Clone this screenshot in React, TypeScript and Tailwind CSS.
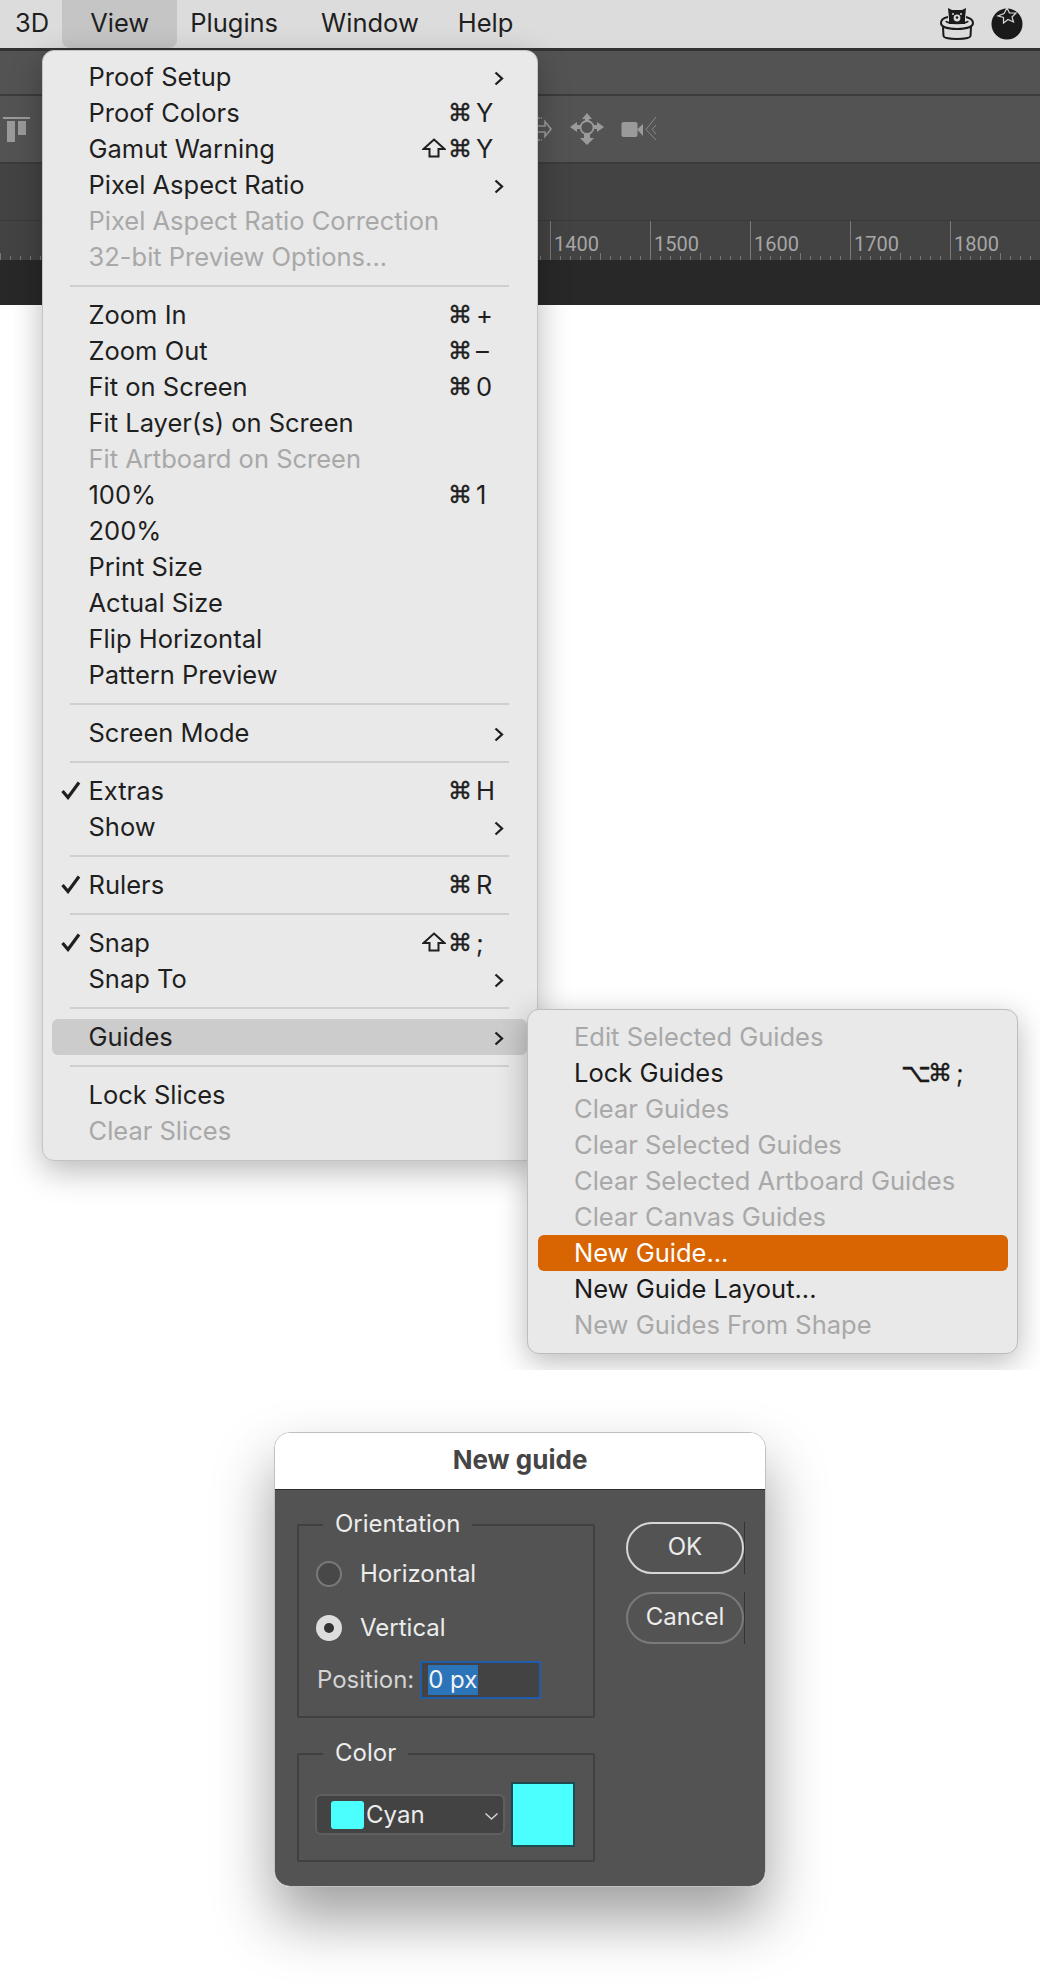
import { Fragment } from 'react';

type Item = { label: string; off?: boolean; check?: boolean; arrow?: boolean; shift?: boolean; cmd?: boolean; key2?: string; active?: boolean };

const groups: Item[][] = [
  [
    { label: 'Proof Setup', arrow: true },
    { label: 'Proof Colors', cmd: true, key2: 'Y' },
    { label: 'Gamut Warning', shift: true, cmd: true, key2: 'Y' },
    { label: 'Pixel Aspect Ratio', arrow: true },
    { label: 'Pixel Aspect Ratio Correction', off: true },
    { label: '32-bit Preview Options...', off: true },
  ],
  [
    { label: 'Zoom In', cmd: true, key2: '+' },
    { label: 'Zoom Out', cmd: true, key2: '–' },
    { label: 'Fit on Screen', cmd: true, key2: '0' },
    { label: 'Fit Layer(s) on Screen' },
    { label: 'Fit Artboard on Screen', off: true },
    { label: '100%', cmd: true, key2: '1' },
    { label: '200%' },
    { label: 'Print Size' },
    { label: 'Actual Size' },
    { label: 'Flip Horizontal' },
    { label: 'Pattern Preview' },
  ],
  [{ label: 'Screen Mode', arrow: true }],
  [
    { label: 'Extras', check: true, cmd: true, key2: 'H' },
    { label: 'Show', arrow: true },
  ],
  [{ label: 'Rulers', check: true, cmd: true, key2: 'R' }],
  [
    { label: 'Snap', check: true, shift: true, cmd: true, key2: ';' },
    { label: 'Snap To', arrow: true },
  ],
  [{ label: 'Guides', arrow: true, active: true }],
  [{ label: 'Lock Slices' }, { label: 'Clear Slices', off: true }],
];

const guideItems = [
  { label: 'Edit Selected Guides', off: true },
  { label: 'Lock Guides', shortcut: true },
  { label: 'Clear Guides', off: true },
  { label: 'Clear Selected Guides', off: true },
  { label: 'Clear Selected Artboard Guides', off: true },
  { label: 'Clear Canvas Guides', off: true },
  { label: 'New Guide...', picked: true },
  { label: 'New Guide Layout...' },
  { label: 'New Guides From Shape', off: true },
];

const rulerLabels = ['1400', '1500', '1600', '1700', '1800'];

function Chevron() {
  return (
    <svg width="10" height="15" viewBox="0 0 10 15" className="absolute left-[442px] top-[12px]" fill="none" stroke="#1f1f1f" strokeWidth="2.3">
      <path d="M1.5 1.5 L8 7.5 L1.5 13.5" />
    </svg>
  );
}

function Tick() {
  return (
    <svg width="20" height="19" viewBox="0 0 20 19" className="absolute left-[9px] top-[8px]" fill="none" stroke="#1f1f1f" strokeWidth="3.2">
      <path d="M1.5 10 L7 16.5 L18 1.5" />
    </svg>
  );
}

function ShiftIcon() {
  return (
    <svg width="24" height="20" viewBox="0 0 24 20" className="absolute left-[370px] top-[7px]" fill="none" stroke="#1f1f1f" strokeWidth="2">
      <path d="M12 1.5 L22.5 11 H16.5 V18.5 H7.5 V11 H1.5 Z" />
    </svg>
  );
}

// one keyboard symbol, placed on its own column of the row
function KeySymbol({ glyph, className }: { glyph: string; className: string }) {
  return (
    <span className={`absolute top-0 flex h-full items-center font-['DejaVu_Sans',sans-serif] ${className}`}>{glyph}</span>
  );
}

function MenuRow({ item }: { item: Item }) {
  return (
    <div className={`relative flex h-[36px] items-center rounded-[6px] pl-[36.5px] ${item.active ? 'bg-[#cccccc]' : ''} ${item.off ? 'text-[#a8a8a8]' : 'text-[#1f1f1f]'}`}>
      {item.check && <Tick />}
      <span>{item.label}</span>
      {item.shift && <ShiftIcon />}
      {item.cmd && <KeySymbol glyph="⌘" className="left-[396px] text-[24px] [-webkit-text-stroke:0.4px]" />}
      {item.key2 && <span className="absolute left-[424px] top-0 flex h-full items-center">{item.key2}</span>}
      {item.arrow && <Chevron />}
    </div>
  );
}

function Ruler() {
  const ticks = Array.from({ length: 110 }, (_, i) => i);
  return (
    <div className="relative h-[40px] border-t border-[#3a3a3a] bg-[#434343]">
      <svg width="1040" height="39" className="absolute left-0 top-0" stroke="#767676" strokeWidth="1">
        {ticks.map((i) => {
          const x = i * 10 + 0.5;
          const isMid = i % 10 === 0;
          return <line key={i} x1={x} x2={x} y1={isMid ? 32 : 35} y2={39} />;
        })}
      </svg>
      <div className="relative flex h-full pl-[500px]">
        {rulerLabels.map((label) => (
          <div key={label} className="ml-[50px] w-[50px] whitespace-nowrap border-l border-[#7a7a7a] pl-[3px] pt-[10px] font-['Roboto',sans-serif] text-[20px] leading-[26px] text-[#a6a6a6]">
            {label}
          </div>
        ))}
      </div>
    </div>
  );
}

function BearIcon() {
  return (
    <svg width="34" height="36" viewBox="0 0 34 36" fill="none">
      <path d="M9 13 L8 3 L12 5 H22 L26 3 L25 13 L25 19 H9 Z" fill="#1a1a1a" />
      <circle cx="17" cy="13" r="3.4" fill="#d8d8d8" />
      <circle cx="17" cy="12.5" r="1.3" fill="#1a1a1a" />
      <circle cx="13" cy="9" r="1" fill="#d8d8d8" />
      <circle cx="21" cy="9" r="1" fill="#d8d8d8" />
      <path d="M8 12 C3 13 1 15 1 18 C1 22 8 24 17 24 C26 24 33 22 33 18 C33 15 30 13 26 12" stroke="#1a1a1a" strokeWidth="2" />
      <path d="M6 16 C7 19 27 19 28 16" stroke="#1a1a1a" strokeWidth="2" />
      <path d="M3 22 L3.5 31 C4 35 30 35 30.5 31 L31 22" stroke="#1a1a1a" strokeWidth="2" />
    </svg>
  );
}

function TomatoIcon() {
  return (
    <svg width="32" height="33" viewBox="0 0 32 33" fill="none">
      <circle cx="16" cy="17" r="15.5" fill="#1a1a1a" />
      <path d="M16 1 L18.5 6 L25 6 L21 10 L22.5 15 L17 12.5 L12.5 16 L12.5 10.5 L7 9 L13 6.5 Z" fill="#1a1a1a" stroke="#d8d8d8" strokeWidth="1.2" />
    </svg>
  );
}

function DistributeSliver() {
  return (
    <svg width="14" height="28" viewBox="0 0 14 28" fill="none" stroke="#9a9a9a" strokeWidth="1.6">
      <path d="M0 11 H7 V6.5 L13 14 L7 21.5 V17 H0" />
      <path d="M0 3 H4 M0 25 H4" strokeDasharray="2 1" />
    </svg>
  );
}

function MoveIcon() {
  return (
    <svg width="36" height="32" viewBox="0 0 36 32" fill="#9a9a9a">
      <path d="M18 0 L23 6 H13 Z M1 14 L8 9 V19 Z M35 14 L28 9 V19 Z M18 32 L11 25 H25 Z" />
      <path d="M7 12 H11 V16 H7 Z M25 12 H29 V16 H25 Z M16 5 H20 V9 H16 Z M15 20 H21 V26 H15 Z" />
      <circle cx="18" cy="14.5" r="6.5" fill="none" stroke="#9a9a9a" strokeWidth="1.8" />
    </svg>
  );
}

function CameraIcon() {
  return (
    <svg width="37" height="26" viewBox="0 0 37 26" fill="none">
      <rect x="0.5" y="6" width="16" height="15" rx="2" fill="#9a9a9a" />
      <path d="M16 13.5 L22 8 V20 Z" fill="#9a9a9a" />
      <path d="M35 1 L25 13.5 L35 24 M35 9 L31 13.5 L35 18" stroke="#8c8c8c" strokeWidth="1" />
    </svg>
  );
}

function AppBar() {
  return (
    <div className="flex h-[48px] items-center bg-[#dcdcdc] pb-[2px] pl-[15px] text-[#1f1f1f]">
      <span>3D</span>
      <div className="-mb-[2px] ml-[13px] flex h-[48px] items-center rounded-b-[8px] bg-[#c5c5c5] px-[28px] pb-[2px]">View</div>
      <span className="ml-[13px]">Plugins</span>
      <span className="ml-[43px]">Window</span>
      <span className="ml-[39px]">Help</span>
      <div className="ml-auto mr-[17px] flex items-center gap-[17px]">
        <BearIcon />
        <TomatoIcon />
      </div>
    </div>
  );
}

function Toolbars() {
  return (
    <div className="border-t-[3px] border-[#333333]">
      <div className="h-[43px] bg-[#535353]" />
      <div className="flex h-[68px] items-center border-t-2 border-[#3b3b3b] bg-[#535353]">
        <div className="ml-[3px] w-[27px] border-t-2 border-[#9a9a9a] pt-[2px]">
          <div className="ml-[4px] flex items-start gap-[3px]">
            <div className="h-[21px] w-[8px] bg-[#9a9a9a]" />
            <div className="h-[14px] w-[8px] bg-[#9a9a9a]" />
          </div>
        </div>
        <div className="ml-[508px] flex items-center">
          <DistributeSliver />
          <div className="ml-[17px]"><MoveIcon /></div>
          <div className="ml-[16px]"><CameraIcon /></div>
        </div>
      </div>
      <div className="h-[58px] border-t-2 border-[#3b3b3b] bg-[#434343]" />
      <Ruler />
      <div className="h-[45px] bg-[#282828]" />
    </div>
  );
}

function MainMenu() {
  return (
    <div className="absolute left-[42px] top-[50px] w-[496px] rounded-[12px] border border-[#c4c4c4] bg-[#e9e9e9] pb-[11px] pl-[9px] pr-[10px] pt-[8px] shadow-[0_10px_32px_rgba(0,0,0,0.28)]">
      {groups.map((group, i) => (
        <Fragment key={i}>
          {i > 0 && (
            <div className="flex h-[22px] items-center px-[18px]">
              <div className="h-[2px] w-full bg-[#cfcfcf]" />
            </div>
          )}
          {group.map((item) => (
            <MenuRow key={item.label} item={item} />
          ))}
        </Fragment>
      ))}
    </div>
  );
}

function GuidesMenu() {
  return (
    <div className="absolute left-[527px] top-[1009px] w-[491px] rounded-[12px] border border-[#bdbdbd] bg-[#e9e9e9] pb-[10px] pl-[10px] pr-[9px] pt-[9px] shadow-[0_8px_30px_rgba(0,0,0,0.28)]">
      {guideItems.map((item) => (
        <div
          key={item.label}
          className={`relative flex h-[36px] items-center rounded-[6px] pl-[36px] ${item.picked ? 'bg-[#d86402] text-white' : item.off ? 'text-[#a8a8a8]' : 'text-[#1a1a1a]'}`}
        >
          {item.label}
          {item.shortcut && (
            <>
              <KeySymbol glyph="⌥" className="left-[363px] text-[26px] [-webkit-text-stroke:0.4px]" />
              <KeySymbol glyph="⌘" className="left-[390px] text-[24px] [-webkit-text-stroke:0.4px]" />
              <span className="absolute left-[418px] top-0 flex h-full items-center">;</span>
            </>
          )}
        </div>
      ))}
    </div>
  );
}

function DialogButton({ label, ringClass }: { label: string; ringClass: string }) {
  return (
    <div className={`relative flex h-[52px] w-[118px] items-center justify-center rounded-full border-2 pb-[2px] ${ringClass}`}>
      {label}
      <div className="absolute -bottom-[2px] -right-[3px] -top-[2px] w-[1px] bg-[#333333]" />
    </div>
  );
}

function GuideDialog() {
  return (
    <div className="w-[492px] overflow-hidden rounded-[16px] border border-[#c0c0c0] shadow-[0_32px_60px_rgba(0,0,0,0.38)]">
      <div className="flex h-[56px] items-center justify-center bg-white pb-[3px] text-[26px] font-bold text-[#454545]">New guide</div>
      <div className="flex h-[397px] gap-[31px] border-t border-[#2c2c2c] bg-[#535353] pl-[22px] pt-[21px] text-[24px] text-[#ececec]">
        <div className="flex w-[298px] flex-col gap-[22px]">
          <fieldset className="h-[207px] rounded-[2px] border-2 border-[#404040] px-[17px]">
            <legend className="ml-[7px] px-[12px] pb-[2px] leading-[26px]">Orientation</legend>
            <div className="mt-[19px] flex h-[32px] items-center gap-[18px]">
              <div className="h-[26px] w-[26px] rounded-full border-2 border-[#797979] bg-[#484848]" />
              <span>Horizontal</span>
            </div>
            <div className="mt-[22px] flex h-[32px] items-center gap-[18px]">
              <div className="flex h-[26px] w-[26px] items-center justify-center rounded-full bg-[#dddddd]">
                <div className="h-[10px] w-[10px] rounded-full bg-[#333333]" />
              </div>
              <span>Vertical</span>
            </div>
            <div className="ml-[1px] mt-[17px] flex items-center gap-[6px] text-[#d4d4d4]">
              <span>Position:</span>
              <div className="flex h-[38px] w-[121px] items-center border-2 border-[#1f5cac] bg-[#434343] pl-[6px] text-[#f2f2f2]">
                <span className="flex h-[30px] items-center bg-[#2b74ba] pr-[1px]">0 px</span>
              </div>
            </div>
          </fieldset>
          <fieldset className="h-[122px] rounded-[2px] border-2 border-[#404040] pl-[16px]">
            <legend className="ml-[8px] px-[12px] pb-[2px] leading-[26px]">Color</legend>
            <div className="mt-[14px] flex items-center gap-[6px]">
              <div className="flex h-[41px] w-[190px] items-center rounded-[6px] border-2 border-[#5f5f5f] bg-[#434343] pl-[14px]">
                <div className="h-[28px] w-[33px] rounded-[3px] bg-[#4bffff]" />
                <span className="ml-[2px] flex-1">Cyan</span>
                <svg width="15" height="9" viewBox="0 0 15 9" className="mr-[4px] mt-[3px]" fill="none" stroke="#cfcfcf" strokeWidth="1.6">
                  <path d="M1.5 1.5 L7.5 7 L13.5 1.5" />
                </svg>
              </div>
              <div className="h-[65px] w-[64px] border-2 border-[#1d4a4e] bg-[#4bffff]" />
            </div>
          </fieldset>
        </div>
        <div className="flex flex-col gap-[18px] pt-[11px]">
          <DialogButton label="OK" ringClass="border-[#d6d6d6]" />
          <DialogButton label="Cancel" ringClass="border-[#7a7a7a]" />
        </div>
      </div>
    </div>
  );
}

export default function App() {
  return (
    <div className="h-[1983px] w-[1040px] overflow-hidden bg-white font-['Inter',sans-serif] text-[25.5px] leading-none">
      <div className="relative h-[1370px] overflow-hidden">
        <AppBar />
        <Toolbars />
        <MainMenu />
        <GuidesMenu />
      </div>
      <div className="flex justify-center pt-[62px]">
        <GuideDialog />
      </div>
    </div>
  );
}
